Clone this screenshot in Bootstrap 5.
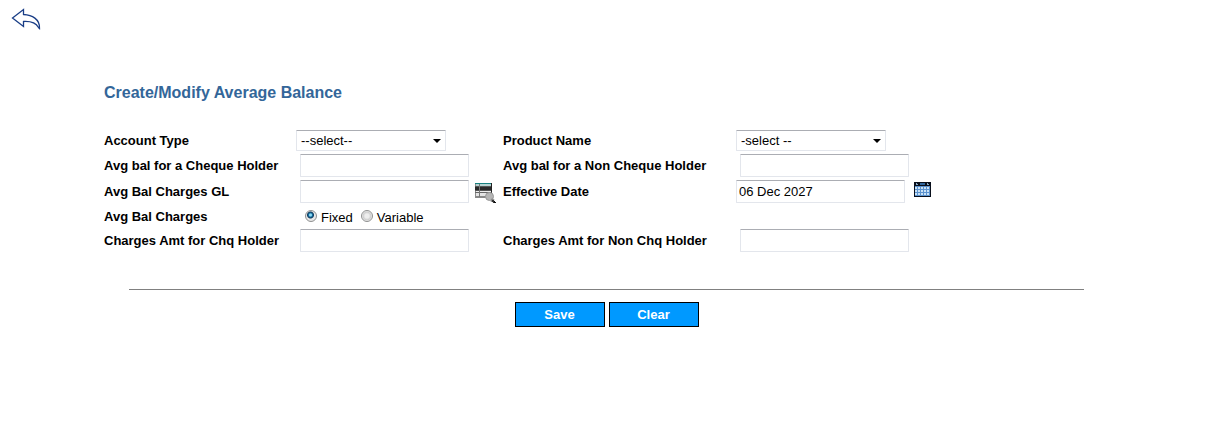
<!DOCTYPE html>
<html lang="en">
<head>
<meta charset="utf-8">
<meta name="viewport" content="width=device-width, initial-scale=1">
<title>Create/Modify Average Balance</title>
<link rel="stylesheet" href="https://cdn.jsdelivr.net/npm/bootstrap@5.3.0/dist/css/bootstrap.min.css">
<style>
  body { font-family: "Liberation Sans", Arial, sans-serif; font-size: 13px; line-height: 16px; color: #000; background: #fff; }
  .topbar { height: 80px; padding: 8px 11px; }
  .topbar a, .lookup svg { display: block; }
  .page { margin: 0 104px; }
  h1 { font-size: 16px; line-height: 26px; font-weight: 700; color: #336699; margin-bottom: 24px; }
  .fields { grid-template-columns: 192fr 207fr 233fr 373fr; grid-template-rows: 24px 26px 25px 24px 24px; align-items: start; }
  .fields > .name { font-weight: 700; padding-top: 4px; }
  .fields > .name.for-select { padding-top: 3px; }
  .fields .form-control, .fields .form-select {
    font-size: 13px; line-height: 17px; color: #000; border: 1px solid #e3e6ec; border-top-color: #abadb3; border-radius: 1px;
    background-color: #fff; box-shadow: none;
  }
  .fields .form-control { width: 169px; height: 23px; min-height: 0; padding: 2px; }
  .fields .form-select {
    width: 150px; height: 21px; padding: 1px 20px 1px 4px;
    background-image: url("data:image/svg+xml,%3Csvg xmlns='http://www.w3.org/2000/svg' width='8' height='4'%3E%3Cpath d='M0 0h8L4 4z'/%3E%3C/svg%3E");
    background-size: 8px 4px; background-position: right 4px center;
  }
  .lookup { border: 0; padding: 0; background: none; }
  .gl-lookup { margin-left: 5px; padding-top: 3px; }
  .date-lookup { margin-left: 9px; padding-top: 2px; }
  .choices { gap: 4px; padding: 5px 0 0 9px; }
  .choice { appearance: none; width: 12px; height: 12px; border: 1px solid #8e8f8f; border-radius: 50%; background: radial-gradient(circle, #eee 0 2px, #ccc 4px, #f4f4f4 5px); }
  .choice:checked { background: radial-gradient(circle at 45% 40%, #8edaf2 0 1px, #176d9f 2px, #123c5d 3px, #e8e8e8 4px); }
  .rule { width: 95%; margin: 36px auto 12px; border-top: 1px solid #808080; opacity: 1; }
  .action { width: 90px; height: 25px; padding: 0; border: 1px solid #000; border-radius: 0; font-size: 13px; line-height: 20px; font-weight: 700; }
  .action, .action:hover { background: #0099ff; color: #fff; border-color: #000; }
</style>
</head>
<body>
<header class="topbar d-flex align-items-start">
  <a href="#" aria-label="Back">
    <svg width="31" height="22" viewBox="0 0 31 22" fill="none" stroke="#193d86" stroke-width="1.300"><path d="M1.500 10 12.500 1.500V6.500C21 7 29 11 28.500 20.500L27.500 19.500C25 15 21 13 12.500 13.500V18.500Z"/></svg>
  </a>
</header>
<main class="page">
  <h1>Create/Modify Average Balance</h1>
  <form>
    <div class="fields d-grid">
      <label class="name for-select" for="acct">Account Type</label>
      <div><select class="form-select" id="acct"><option>--select--</option></select></div>
      <label class="name for-select" for="prod">Product Name</label>
      <div><select class="form-select" id="prod"><option>-select --</option></select></div>

      <label class="name" for="chq">Avg bal for a Cheque Holder</label>
      <div class="ps-1"><input class="form-control" id="chq" type="text"></div>
      <label class="name" for="nonchq">Avg bal for a Non Cheque Holder</label>
      <div class="ps-1"><input class="form-control" id="nonchq" type="text"></div>

      <label class="name" for="gl">Avg Bal Charges GL</label>
      <div class="d-flex align-items-start ps-1">
        <input class="form-control" id="gl" type="text">
        <button class="lookup gl-lookup" type="button" aria-label="Look up GL">
          <svg width="23" height="21" viewBox="0 0 23 21">
            <path d="M1 0h17v15H1z" fill="#8a8a8a"/><path d="M1 0h16v1H1z" fill="#168080"/><path d="M2 1h15v2H2z" fill="#b5d3d1"/>
            <path d="M1 4h17v3H1z" fill="#292929"/><path d="M1 3h17v1H1zM1 7h17v1H1z" fill="#555"/><path d="M2 8h15v1H2z" fill="#eee"/><path d="M1 9h16v1H1z" fill="#666"/><path d="M2 10h14v3H2z" fill="#e4e4e4"/><path d="M5 1h1v13H5z" fill="#777"/><path d="M17 0h1v11h-1z" fill="#222"/>
            <circle cx="15.500" cy="13.500" r="4" fill="#b5b5b5" stroke="#999"/><path d="m17 17 3 1" stroke="#888" stroke-width="3"/><path d="M18 17h2v1h1v2h-2v-1h-1z" fill="#333"/><path d="M20 18h1v1h1v1h-2z" fill="#111"/>
          </svg>
        </button>
      </div>
      <label class="name" for="date">Effective Date</label>
      <div class="d-flex align-items-start">
        <input class="form-control" id="date" type="text" value="06 Dec 2027">
        <button class="lookup date-lookup" type="button" aria-label="Pick a date">
          <svg width="18" height="15" viewBox="0 0 18 15">
            <path d="M0 0h17v15H0z" fill="#090f1b"/><path d="M6 1h5v2H6z" fill="#2f659c"/><path d="M2 1h1v1h1v1H2zM13 1h1v1h1v1h-2z" fill="#8aaac5"/>
            <path d="M1 4h15v10H1z" fill="#5b92cf"/><path d="M1 5h15v2H1zM1 8h15v2H1zM1 11h15v2H1z" fill="#c9e1f5"/>
            <path d="M3 4h1v10H3zM6 4h1v10H6zM9 4h1v10H9zM12 4h1v10h-1zM15 4h1v10h-1z" fill="#5b92cf"/>
          </svg>
        </button>
      </div>

      <span class="name" id="kind">Avg Bal Charges</span>
      <div class="choices d-flex align-items-start" role="radiogroup" aria-labelledby="kind">
        <input class="choice m-0" type="radio" name="kind" id="fixed" checked><label class="me-1" for="fixed">Fixed</label>
        <input class="choice m-0" type="radio" name="kind" id="variable"><label for="variable">Variable</label>
      </div>
      <span></span><span></span>

      <label class="name" for="amt">Charges Amt for Chq Holder</label>
      <div class="ps-1"><input class="form-control" id="amt" type="text"></div>
      <label class="name" for="amtnon">Charges Amt for Non Chq Holder</label>
      <div class="ps-1"><input class="form-control" id="amtnon" type="text"></div>
    </div>
    <hr class="rule">
    <div class="d-flex justify-content-center gap-1">
      <button class="btn action" type="button">Save</button>
      <button class="btn action" type="reset">Clear</button>
    </div>
  </form>
</main>
<script src="https://cdn.jsdelivr.net/npm/bootstrap@5.3.0/dist/js/bootstrap.bundle.min.js"></script>
</body>
</html>
